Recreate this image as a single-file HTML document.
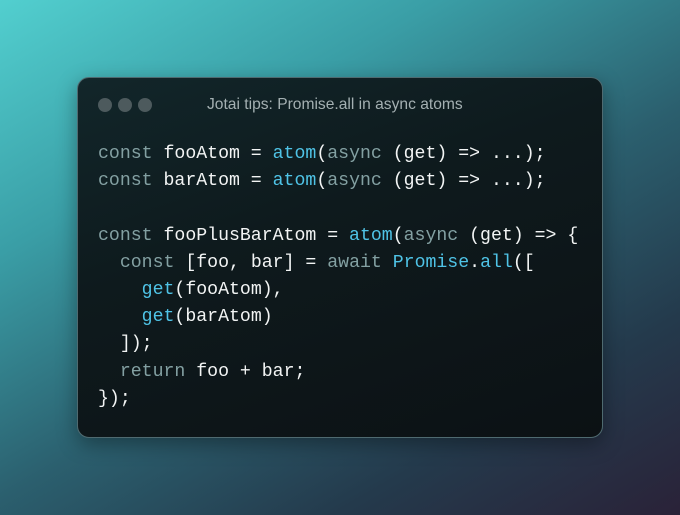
<!DOCTYPE html>
<html><head><style>
html,body{margin:0;padding:0;}
body{width:680px;height:515px;overflow:hidden;position:relative;
background:linear-gradient(150deg,#52cfcf 0%,#3a9ea6 28%,#2b5f6e 55%,#243a4c 78%,#2a2238 100%);}
.card{position:absolute;left:77px;top:77px;width:524px;height:359px;border-radius:12px;
background:linear-gradient(160deg,#12262a 0%,#0e1a1d 40%,#0c1114 100%);
border:1px solid #4f6a70;box-shadow:0 6px 20px rgba(0,0,0,.35);}
.dot{position:absolute;top:20px;width:14px;height:14px;border-radius:50%;background:#4d5a5d;}
.title{position:absolute;left:129px;top:18px;font:15.6px "Liberation Sans",sans-serif;color:#a4b0b2;}
pre{position:absolute;left:20px;top:63px;margin:0;font:18.2px/27.2px "Liberation Mono",monospace;color:#f2f4f4;}
.k{color:#83a0a2}.f{color:#4fc3e6}
</style></head><body>
<div class="card">
<div class="dot" style="left:20px"></div><div class="dot" style="left:40px"></div><div class="dot" style="left:60px"></div>
<div class="title">Jotai tips: Promise.all in async atoms</div>
<pre><span class="k">const</span> fooAtom = <span class="f">atom</span>(<span class="k">async</span> (get) =&gt; ...);
<span class="k">const</span> barAtom = <span class="f">atom</span>(<span class="k">async</span> (get) =&gt; ...);

<span class="k">const</span> fooPlusBarAtom = <span class="f">atom</span>(<span class="k">async</span> (get) =&gt; {
  <span class="k">const</span> [foo, bar] = <span class="k">await</span> <span class="f">Promise</span>.<span class="f">all</span>([
    <span class="f">get</span>(fooAtom),
    <span class="f">get</span>(barAtom)
  ]);
  <span class="k">return</span> foo + bar;
});</pre>
</div>
</body></html>
